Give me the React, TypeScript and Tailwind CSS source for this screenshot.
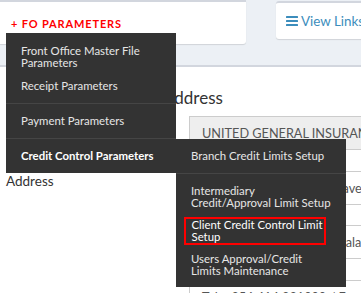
import React from "react";

function Bars() {
  return (
    <svg width="12" height="10" viewBox="0 0 12 10" className="shrink-0">
      <rect x="0" y="0" width="12" height="2" rx="0.5" fill="#3c8dbc" />
      <rect x="0" y="4" width="12" height="2" rx="0.5" fill="#3c8dbc" />
      <rect x="0" y="8" width="12" height="2" rx="0.5" fill="#3c8dbc" />
    </svg>
  );
}

function Item({ children, bold = false }: { children: React.ReactNode; bold?: boolean }) {
  return (
    <div
      className={
        "px-[15px] py-[5.5px] leading-[12px] text-[11.4px] whitespace-nowrap " +
        (bold ? "font-bold text-white" : "text-[#e6e6e6]")
      }
    >
      {children}
    </div>
  );
}

function Divider() {
  return <div className="my-[5.5px] h-px bg-[#454545]" />;
}

export default function App() {
  return (
    <div className="relative w-[361px] h-[293px] overflow-hidden bg-[#ecf0f5] [font-family:Lato,sans-serif]">
      <div className="flex items-start h-[65px]">
        <div className="relative z-10 w-[246px] h-[44px] shrink-0 bg-white border-t-2 border-[#d2d6de] rounded-br-[3px] shadow-[0_1px_1px_rgba(0,0,0,0.12)]">
          <div className="pl-[11px] pt-[15px] text-[11px] leading-[14px] font-bold tracking-[0.85px] text-[#ff0000]">
            + FO PARAMETERS
          </div>
          <div className="absolute left-[6px] top-[31px] w-[170px] bg-[#333333] pt-[6px] pb-[5.5px]">
            <Item>
              Front Office Master File
              <br />
              Parameters
            </Item>
            <Item>Receipt Parameters</Item>
            <Divider />
            <Item>Payment Parameters</Item>
            <Divider />
            <div className="relative">
              <Item bold>Credit Control Parameters</Item>
              <div className="absolute left-full top-[-5.5px] w-[170px] bg-[#333333] pt-[5.5px] pb-[5px]">
                <Item>Branch Credit Limits Setup</Item>
                <Divider />
                <Item>
                  Intermediary
                  <br />
                  Credit/Approval Limit Setup
                </Item>
                <div className="py-[2.5px]">
                  <div className="ml-[8px] w-[142px] border-2 border-[#ff0000] pl-[5.5px] leading-[12px] text-[11.4px] text-white whitespace-nowrap">
                    Client Credit Control Limit
                    <br />
                    Setup
                  </div>
                </div>
                <Item>
                  Users Approval/Credit
                  <br />
                  Limits Maintenance
                </Item>
              </div>
            </div>
          </div>
        </div>
        <div className="ml-[30px] mt-px w-[100px] h-[38px] shrink-0 bg-white border-t-2 border-[#d2d6de] rounded-[3px] shadow-[0_1px_1px_rgba(0,0,0,0.12)] flex items-center pl-[10px] gap-[3px] text-[#3c8dbc] text-[13.4px] whitespace-nowrap">
          <Bars />
          <span>View Links</span>
        </div>
      </div>
      <div className="bg-white border-t-2 border-[#d2d6de] h-[228px]">
        <div className="mt-[21px] pl-[163px] text-[17px] leading-[20px] text-[#333]">Address</div>
        <div className="mt-[8px] flex flex-col gap-[20.5px] text-[13.5px] leading-[20px]">
          <div className="flex">
            <div className="w-[189px] shrink-0 pl-[6px] text-[#333]">Company</div>
            <div className="w-[300px] h-[34px] shrink-0 border border-[#cccccc] bg-[#eeeeee] px-[12px] flex items-center text-[#555] text-[12.7px] whitespace-nowrap">
              UNITED GENERAL INSURANCE COMPANY LIMITED
            </div>
          </div>
          <div className="flex">
            <div className="w-[189px] shrink-0 pl-[6px] text-[#333]">Address</div>
            <div className="w-[300px] h-[34px] shrink-0 border border-[#cccccc] bg-white px-[12px] flex items-center text-[#555] text-[12.7px] whitespace-nowrap">
              Plot 2, Pilkington Road, Cavendish House
            </div>
          </div>
          <div className="flex">
            <div className="w-[189px] shrink-0 pl-[6px] text-[#333]"></div>
            <div className="w-[300px] h-[34px] shrink-0 border border-[#cccccc] bg-white px-[12px] flex items-center text-[#555] text-[12.7px] whitespace-nowrap">
              P. O. Box 362 GPO, Kampala
            </div>
          </div>
          <div className="flex">
            <div className="w-[189px] shrink-0 pl-[6px] text-[#333]"></div>
            <div className="w-[300px] h-[34px] shrink-0 border border-[#cccccc] bg-white px-[12px] flex items-center text-[#555] text-[12.7px] whitespace-nowrap">
              Tel: +256 414 331000 / Fax
            </div>
          </div>
        </div>
      </div>
    </div>
  );
}
